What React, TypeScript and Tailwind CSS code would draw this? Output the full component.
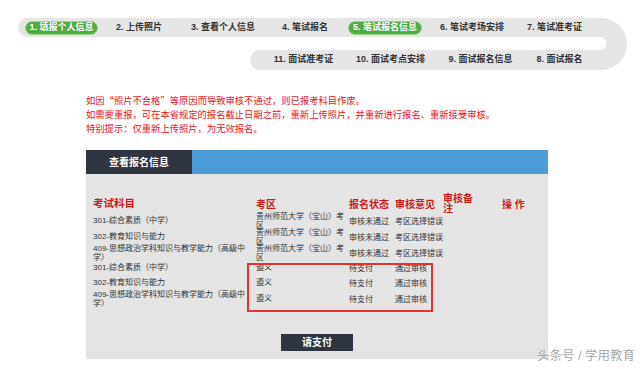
import React from "react";

type Row = { subj: string[]; area: string[]; status: string; opinion: string; h: string };

const ROWS: Row[] = [
  { subj: ["301-综合素质（中学）"], area: ["贵州师范大学（宝山）考", "区"], status: "审核未通过", opinion: "考区选择错误", h: "h-[16px]" },
  { subj: ["302-教育知识与能力"], area: ["贵州师范大学（宝山）考", "区"], status: "审核未通过", opinion: "考区选择错误", h: "h-[16px]" },
  { subj: ["409-思想政治学科知识与教学能力（高级中", "学）"], area: ["贵州师范大学（宝山）考", "区"], status: "审核未通过", opinion: "考区选择错误", h: "h-[16px]" },
  { subj: ["301-综合素质（中学）"], area: ["遵义"], status: "待支付", opinion: "通过审核", h: "h-[15px]" },
  { subj: ["302-教育知识与能力"], area: ["遵义"], status: "待支付", opinion: "通过审核", h: "h-[15px]" },
  { subj: ["409-思想政治学科知识与教学能力（高级中", "学）"], area: ["遵义"], status: "待支付", opinion: "通过审核", h: "h-[15px]" },
];

function Lines({ lines }: { lines: string[] }) {
  return (
    <div className="leading-[8.5px]">
      {lines.map((l, i) => (
        <div key={i} className="whitespace-nowrap">{l}</div>
      ))}
    </div>
  );
}

function Pill({ children, w }: { children: React.ReactNode; w: string }) {
  return (
    <div className={`${w} h-[14px] rounded-full bg-[#52ab45] border border-[#9bd28e] flex items-center justify-center text-white`}>
      {children}
    </div>
  );
}

function Stepper() {
  return (
    <div className="relative mt-[18px] h-[52px] text-[9px] font-bold text-[#333]">
      {/* track */}
      <svg className="absolute left-0 top-0" width="640" height="52" viewBox="0 0 640 52">
        <path
          d="M 27.5 0 H 601 A 26 26 0 0 1 601 52 H 260 A 10 10 0 0 1 260 32 H 600 A 6.5 6.5 0 0 0 600 19 H 27.5 A 9.5 9.5 0 0 1 27.5 0 Z"
          fill="#e6e6e6"
        />
      </svg>
      <div className="relative flex h-[19px] items-center pl-[25px]">
        <Pill w="w-[73px]">1. 填报个人信息</Pill>
        <span className="w-[82px] text-center">2. 上传照片</span>
        <span className="w-[86px] text-center">3. 查看个人信息</span>
        <span className="w-[78px] text-center">4. 笔试报名</span>
        <div className="ml-[4px]">
          <Pill w="w-[74px]">5. 笔试报名信息</Pill>
        </div>
        <span className="w-[100px] text-center">6. 笔试考场安排</span>
        <span className="w-[65px] text-center">7. 笔试准考证</span>
      </div>
      <div className="relative mt-[13px] flex h-[20px] items-center pl-[262px]">
        <span className="w-[83px] text-center">11. 面试准考证</span>
        <span className="w-[91px] text-center">10. 面试考点安排</span>
        <span className="w-[89px] text-center">9. 面试报名信息</span>
        <span className="w-[69px] text-center">8. 面试报名</span>
      </div>
    </div>
  );
}

export default function App() {
  const cols = "grid grid-cols-[163px_93px_46px_48px_59px_46px]";
  const cjk = "font-['Noto_Sans_CJK_SC',sans-serif]";
  return (
    <div className="relative w-[640px] h-[369px] overflow-hidden bg-white font-['Liberation_Sans','Noto_Sans_CJK_SC',sans-serif]">
      <Stepper />

      {/* 提示 */}
      <div className="mt-[23px] pl-[86px] text-[9.3px] leading-[14px] text-[#e8141c]">
        <div>如因<span className={cjk}>“</span>照片不合格<span className={cjk}>”</span>等原因而导致审核不通过，则已报考科目作废。</div>
        <div>如需要重报，可在本省规定的报名截止日期之前，重新上传照片，并重新进行报名、重新接受审核。</div>
        <div>特别提示：仅重新上传照片，为无效报名。</div>
      </div>

      {/* 报名信息 */}
      <div className="ml-[86px] mt-[14px] w-[462px]">
        <div className="flex h-[24px]">
          <div className="relative flex w-[106px] items-center justify-center bg-[#2e3440] text-[10px] font-bold text-white">
            查看报名信息
            <div className="absolute left-[17px] top-full h-0 w-0 border-l-[11px] border-r-[11px] border-t-[11px] border-l-transparent border-r-transparent border-t-[#2e3440]" />
          </div>
          <div className="flex-1 bg-[#4b9cd9]" />
        </div>

        <div className="relative h-[185px] bg-[#e4e4e4] pl-[7px] pt-[20px]">
          <div className={`${cols} h-[16px] items-center text-[10px] font-bold text-[#cc1a1a]`}>
            <span className="text-[10.5px]">考试科目</span>
            <span>考区</span>
            <span>报名状态</span>
            <span>审核意见</span>
            <span className="leading-[10px]">审核备<br />注</span>
            <span>操 作</span>
          </div>

          <div className="mt-[3px] text-[8px] text-[#333]">
            {ROWS.map((r, i) => (
              <div key={i} className={`${cols} ${r.h} items-center`}>
                <Lines lines={r.subj} />
                <Lines lines={r.area} />
                <span className="whitespace-nowrap">{r.status}</span>
                <span className="whitespace-nowrap">{r.opinion}</span>
                <span />
                <span />
              </div>
            ))}
          </div>

          <div className="mt-[28px] flex justify-center pr-[7px]">
            <button className="h-[17px] w-[72px] bg-[#2e3440] text-[10px] font-bold text-white">请支付</button>
          </div>

          {/* 标注框 */}
          <div className="absolute left-[161px] top-[89px] h-[49px] w-[186px] border-2 border-[#e03434]" />
        </div>
      </div>

      <div className="absolute right-[5px] top-[347px] text-[12.5px] text-[#a8a8a8]">头条号 / 学用教育</div>
    </div>
  );
}
